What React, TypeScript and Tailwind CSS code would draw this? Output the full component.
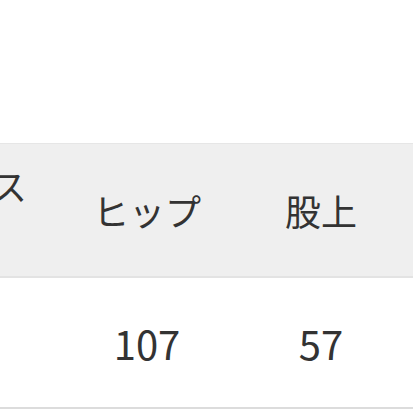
const columns = [
  { label: "ウエス\nト", value: "" },
  { label: "ヒップ", value: "107" },
  { label: "股上", value: "57" },
];

export default function App() {
  return (
    <div
      className="w-[413px] h-[413px] overflow-hidden bg-white text-[#333]"
      style={{ fontFamily: '"Noto Sans CJK JP", "Noto Sans", sans-serif' }}
    >
      <div className="h-[143px]" />
      <div className="border-t border-[#e6e6e6] border-b-2 border-b-[#e3e3e3] bg-[#efefef]">
        <div className="flex -ml-[114px] h-[132px] items-center">
          {columns.map((c) => (
            <div
              key={c.label}
              className="w-[174px] shrink-0 text-center text-[36px] leading-[50px] whitespace-pre-line"
            >
              {c.label}
            </div>
          ))}
        </div>
      </div>
      <div className="border-b-2 border-[#dcdcdc]">
        <div className="flex -ml-[114px] h-[129px] items-center">
          {columns.map((c) => (
            <div
              key={c.label}
              className="w-[174px] shrink-0 text-center text-[40px] leading-none"
            >
              {c.value}
            </div>
          ))}
        </div>
      </div>
    </div>
  );
}
